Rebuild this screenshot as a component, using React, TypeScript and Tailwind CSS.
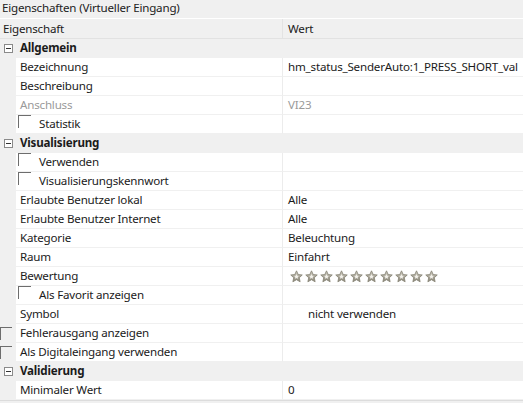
import React from "react";

type Row =
  | { kind: "cat"; label: string }
  | {
      kind: "item";
      label: string;
      value?: React.ReactNode;
      check?: boolean;
      indent?: number;
      muted?: boolean;
      valuePad?: boolean;
    };

const Stars = () => (
  <div className="flex items-center gap-[2px] pl-[2px]">
    {Array.from({ length: 10 }).map((_, i) => (
      <svg key={i} width="13" height="13" viewBox="0 0 24 24">
        <defs>
          <linearGradient id={`g${i}`} x1="0" y1="0" x2="0" y2="1">
            <stop offset="0" stopColor="#d0cdc2" />
            <stop offset="1" stopColor="#8a8678" />
          </linearGradient>
        </defs>
        <path
          d="M12 1.5l3.2 6.9 7.4.8-5.5 5.1 1.6 7.4L12 17.9l-6.7 3.8 1.6-7.4-5.5-5.1 7.4-.8z"
          fill={`url(#g${i})`}
          stroke="#858173"
          strokeWidth="1.5"
          strokeLinejoin="round"
        />
        <path
          d="M12 7.5l1.4 3 3.2.4-2.4 2.2.7 3.2L12 14.7l-2.9 1.6.7-3.2-2.4-2.2 3.2-.4z"
          fill="#f2f0ea"
        />
      </svg>
    ))}
  </div>
);

const rows: Row[] = [
  { kind: "cat", label: "Allgemein" },
  { kind: "item", label: "Bezeichnung", value: "hm_status_SenderAuto:1_PRESS_SHORT_val" },
  { kind: "item", label: "Beschreibung" },
  { kind: "item", label: "Anschluss", value: "VI23", muted: true },
  { kind: "item", label: "Statistik", check: true },
  { kind: "cat", label: "Visualisierung" },
  { kind: "item", label: "Verwenden", check: true },
  { kind: "item", label: "Visualisierungskennwort", check: true },
  { kind: "item", label: "Erlaubte Benutzer lokal", value: "Alle" },
  { kind: "item", label: "Erlaubte Benutzer Internet", value: "Alle" },
  { kind: "item", label: "Kategorie", value: "Beleuchtung" },
  { kind: "item", label: "Raum", value: "Einfahrt" },
  { kind: "item", label: "Bewertung", value: <Stars /> },
  { kind: "item", label: "Als Favorit anzeigen", check: true },
  { kind: "item", label: "Symbol", value: "nicht verwenden", valuePad: true },
  { kind: "item", label: "Fehlerausgang anzeigen", check: true, indent: -1 },
  { kind: "item", label: "Als Digitaleingang verwenden", check: true, indent: -1 },
  { kind: "cat", label: "Validierung" },
  { kind: "item", label: "Minimaler Wert", value: "0" },
];

const Check = () => (
  <span className="inline-block w-[13px] h-[13px] border-t border-l border-[#6d6d6d] shrink-0" />
);

export default function App() {
  return (
    <div
      className="w-[523px] h-[403px] overflow-hidden bg-[#f0f0f0] text-[11.6px] tracking-[-0.2px] text-[#1b1b1b] flex flex-col"
      style={{ fontFamily: '"Segoe UI", "Noto Sans", sans-serif' }}
    >
      <div className="h-[18px] shrink-0 leading-[16px] pl-[2px] text-[#222] bg-[#f0f0f0]">
        Eigenschaften (Virtueller Eingang)
      </div>
      <div className="h-[21px] shrink-0 flex bg-[#f0f0f0] border-t border-white border-b border-b-[#e2e2e2]">
        <div className="w-[283px] pl-[3px] flex items-center border-r border-[#e3e3e3]">Eigenschaft</div>
        <div className="flex-1 pl-[5px] flex items-center">Wert</div>
      </div>
      <div className="flex flex-col shrink-0">
        {rows.map((r, i) =>
          r.kind === "cat" ? (
            <div key={i} className="h-[19px] flex items-center bg-[#f0f0f0] border-b border-[#f0f0f0]">
              <span className="ml-[4px] w-[9px] h-[9px] border border-[#8a8a8a] flex items-center justify-center bg-white">
                <span className="w-[5px] h-[1px] bg-[#333]" />
              </span>
              <span className="ml-[7px] font-bold">{r.label}</span>
            </div>
          ) : (
            <div key={i} className="h-[19px] flex">
              <div className="w-[16px] shrink-0 bg-[#f0f0f0] relative">
                {r.check && r.indent === -1 && (
                  <span className="absolute left-0 top-[3px] w-[12px] h-[13px] border-t border-l border-[#6d6d6d]" />
                )}
              </div>
              <div
                className={`w-[267px] flex items-center border-r border-[#ececec] border-b border-b-[#f0f0f0] bg-white ${
                  r.muted ? "text-[#9a9a9a]" : ""
                }`}
              >
                {r.check && r.indent !== -1 ? (
                  <>
                    <span className="ml-[2px]">
                      <Check />
                    </span>
                    <span className="ml-[8px]">{r.label}</span>
                  </>
                ) : (
                  <span className="ml-[4px]">{r.label}</span>
                )}
              </div>
              <div
                className={`flex-1 flex items-center bg-white border-b border-[#f0f0f0] whitespace-nowrap ${
                  r.valuePad ? "pl-[25px]" : "pl-[5px]"
                } ${r.muted ? "text-[#9a9a9a]" : ""}`}
              >
                {r.value}
              </div>
            </div>
          )
        )}
      </div>
      <div className="border-t border-[#dcdcdc] flex-1 bg-[#f0f0f0]" />
    </div>
  );
}
